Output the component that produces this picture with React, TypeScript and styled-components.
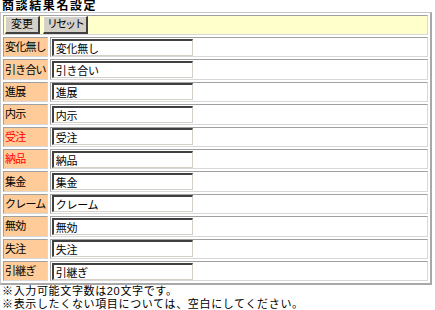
import React from 'react'
import styled, { createGlobalStyle } from 'styled-components'

const GlobalStyle = createGlobalStyle`
  body {
    margin: 0;
    background: #ffffff;
    font-family: "Liberation Sans", "Noto Sans CJK JP", sans-serif;
    font-size: 11px;
    color: #000000;
  }
`

const items = [
  { name: '変化無し', red: false },
  { name: '引き合い', red: false },
  { name: '進展', red: false },
  { name: '内示', red: false },
  { name: '受注', red: true },
  { name: '納品', red: true },
  { name: '集金', red: false },
  { name: 'クレーム', red: false },
  { name: '無効', red: false },
  { name: '失注', red: false },
  { name: '引継ぎ', red: false },
]

const Title = styled.div`
  font-weight: bold;
  font-size: 12px;
  line-height: 12px;
  letter-spacing: 1.6px;
  padding-left: 2px;
`

const Table = styled.table`
  width: 432px;
  border-collapse: separate;
  border-spacing: 2px;
  border-top: 1px solid #c8c8c8;
  border-left: 1px solid #c8c8c8;
  border-right: 2px solid #a8a8a8;
  border-bottom: 2px solid #a8a8a8;
`

const ToolCell = styled.td`
  background: #ffffcc;
  padding: 0 0 0 1px;
  height: 17px;
  vertical-align: middle;
  border-top: 1px solid #a0a0a0;
  border-left: 1px solid #a0a0a0;
  border-right: 1px solid #d8d8d8;
  border-bottom: 1px solid #d8d8d8;
`

const Button = styled.button<{ $tight?: boolean }>`
  font-family: "Liberation Sans", "Noto Sans CJK JP", sans-serif;
  font-size: 11px;
  line-height: 13px;
  height: 18px;
  padding: 0 ${p => (p.$tight ? '3px' : '5px')};
  letter-spacing: ${p => (p.$tight ? '-2px' : '0')};
  margin-right: 3px;
  background: #d4d0c8;
  color: #000;
  border-top: 1px solid #ffffff;
  border-left: 1px solid #ffffff;
  border-right: 2px solid #404040;
  border-bottom: 2px solid #404040;
  vertical-align: middle;
`

const LabelCell = styled.td<{ $red: boolean }>`
  background: #ffcc99;
  color: ${p => (p.$red ? '#ff0000' : '#000000')};
  width: 40px;
  white-space: nowrap;
  padding: 1px 1px 0;
  height: 17.4px;
  line-height: 13px;
  vertical-align: middle;
  border-top: 1px solid #a0a0a0;
  border-left: 1px solid #a0a0a0;
  border-right: 1px solid #d8d8d8;
  border-bottom: 1px solid #d8d8d8;
  letter-spacing: -0.8px;
`

const ValueCell = styled.td`
  background: #ffffff;
  padding: 0 1px;
  vertical-align: middle;
  border-top: 1px solid #a0a0a0;
  border-left: 1px solid #a0a0a0;
  border-right: 1px solid #d8d8d8;
  border-bottom: 1px solid #d8d8d8;
`

const TextInput = styled.input`
  box-sizing: border-box;
  width: 141px;
  height: 17px;
  padding: 0 2px;
  font-family: "Liberation Sans", "Noto Sans CJK JP", sans-serif;
  font-size: 11px;
  letter-spacing: -0.3px;
  color: #000;
  background: #fff;
  border-top: 2px solid #404040;
  border-left: 2px solid #404040;
  border-right: 1px solid #d4d0c8;
  border-bottom: 1px solid #d4d0c8;
  outline: none;
  display: block;
`

const Notes = styled.div`
  padding-left: 2px;
  line-height: 12.5px;
  font-size: 11px;
  letter-spacing: 0.65px;
`

export default function App() {
  return (
    <>
      <GlobalStyle />
      <Title>商談結果名設定</Title>
      <Table>
        <tbody>
          <tr>
            <ToolCell colSpan={2}>
              <Button>変更</Button>
              <Button $tight>リセット</Button>
            </ToolCell>
          </tr>
          {items.map(item => (
            <tr key={item.name}>
              <LabelCell $red={item.red}>{item.name}</LabelCell>
              <ValueCell>
                <TextInput defaultValue={item.name} />
              </ValueCell>
            </tr>
          ))}
        </tbody>
      </Table>
      <Notes>
        <div>※入力可能文字数は20文字です。</div>
        <div>※表示したくない項目については、空白にしてください。</div>
      </Notes>
    </>
  )
}
